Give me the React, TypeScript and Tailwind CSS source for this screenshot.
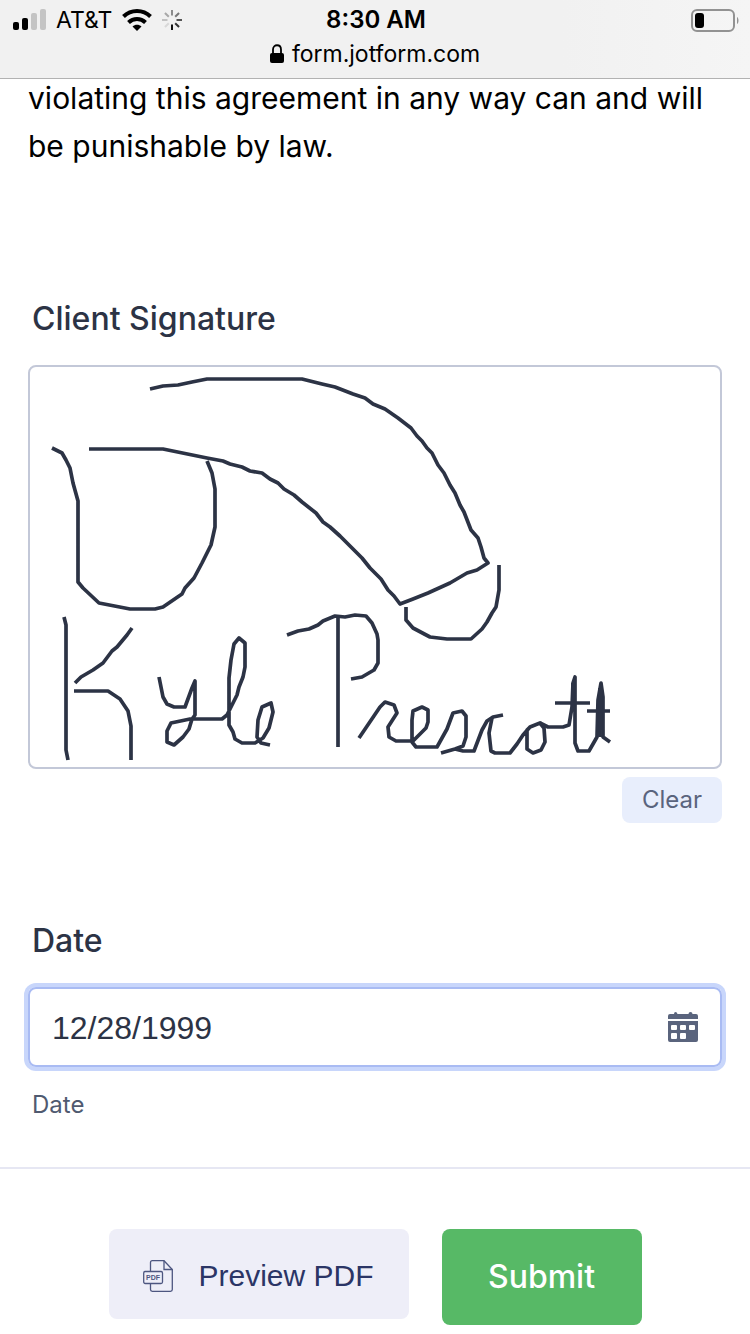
import React, { useState } from 'react';

const SIGNATURE_STROKES = [
  'M150 389L163 386L178 385L192 382L207 379H302L322 384L335 387L353 394L365 398L373 404L385 409L398 418L411 428L417 436L422 441L427 448L432 453L438 465L444 473L450 485L455 493L460 505L464 512L471 530L478 538L481 547L484 558L488 563L477 570L467 573L450 583L428 593L413 599L400 604L394 596L388 590L381 579L370 568L362 558L340 536L330 527L323 522L316 513L302 502L294 495L284 489L278 483L270 479L262 473L250 471L242 467L230 464L223 461L207 458L163 449H89',
  'M52 448L62 453L66 460L70 468L73 483L78 501V582L83 588L99 603L130 609H155L163 607L182 594L185 588L194 578L202 563L211 545L215 527V489L212 473L207 461',
  'M499 565V590L496 607L492 613L487 622L482 629L471 639H447L430 637L413 628L406 620V607',
  'M64 617L66 625V750L68 760',
  'M132 628L127 635L122 641L117 647L112 651L103 663L93 670L81 677L75 683',
  'M74 691H108L120 699L128 711L131 726V760',
  'M159 677L163 697L167 704L174 707H185L192 688L195 681V715L192 719L189 729L183 737L174 745L167 742V731L171 723L190 719H222L227 715L237 695L239 687L243 677L245 667V643L239 638L234 644L231 660L229 678V725L233 732L235 739L242 743H255L263 738L269 728L273 712L271 703L262 707L258 720L257 737L261 743L270 745',
  'M287 635L298 631L309 629L318 625L323 621L335 616L345 617L355 615L366 616L372 623L377 634L378 640V663L374 670L362 677L351 679',
  'M338 616V747',
  'M359 738L380 707L385 702L394 705L397 713L388 727L389 737L396 741H413L426 728L428 722V710L422 707L413 711L412 720V742L416 747H437L447 729L453 713L462 711L466 716V737L463 746L455 749L441 753',
  'M455 749L463 751H474L482 730L487 721L493 717L503 715',
  'M492 718L489 733L491 751L495 753H510L517 744L523 735L530 727L540 723L544 728L545 742L541 750L533 753L527 749V730L530 727',
  'M540 723L548 727H563L569 725L572 707L573 683L575 677V743L578 751H589L597 737L598 700L601 683L603 697V737L610 742',
  'M573 683V707M600 688V737M601 686V730',
  'M555 703H590M587 711H610',
];

const SPINNER_SPOKES = [
  { angle: 0, color: '#8c8c8c' },
  { angle: 45, color: '#777777' },
  { angle: 90, color: '#555555' },
  { angle: 135, color: '#333333' },
  { angle: 180, color: '#111111' },
  { angle: 225, color: '#d8d8d8' },
  { angle: 270, color: '#c2c2c2' },
  { angle: 315, color: '#a8a8a8' },
];

const SignalIcon: React.FC = () => (
  <svg width="33" height="22" viewBox="0 0 33 22" aria-label="Signal strength">
    <rect x="0" y="13" width="6" height="8" rx="2" fill="#000" />
    <rect x="9" y="9" width="6" height="12" rx="2" fill="#000" />
    <rect x="18" y="4" width="6" height="17" rx="2" fill="#c4c4c4" />
    <rect x="27" y="0" width="6" height="21" rx="2" fill="#c4c4c4" />
  </svg>
);

const WifiIcon: React.FC = () => (
  <svg width="30" height="22" viewBox="0 0 30 22" aria-label="Wi-Fi">
    <path d="M1.5 7.5C9 .2 21 .2 28.500 7.500" fill="none" stroke="#000" strokeWidth="4" />
    <path d="M6.500 13.500C11.300 8.800 18.700 8.800 23.500 13.500" fill="none" stroke="#000" strokeWidth="4" />
    <path d="M10.500 17.500C13 15 17 15 19.500 17.500L15 22Z" fill="#000" />
  </svg>
);

const Spinner: React.FC = () => (
  <svg width="20" height="20" viewBox="-10 -10 20 20" aria-label="Loading">
    {SPINNER_SPOKES.map(({ angle, color }) => (
      <path key={angle} d="M0 -4.500V-10" stroke={color} strokeWidth="2" transform={`rotate(${angle})`} />
    ))}
  </svg>
);

const BatteryIcon: React.FC = () => (
  <svg width="48" height="23" viewBox="0 0 48 23" aria-label="Battery low">
    <rect x="1" y="1" width="42" height="21" rx="5" fill="none" stroke="#929292" strokeWidth="2" />
    <rect x="4" y="4" width="9" height="15" rx="3" fill="#000" />
    <path d="M46 8C48 9 48 14 46 15Z" fill="#929292" />
  </svg>
);

const LockIcon: React.FC = () => (
  <svg width="14" height="20" viewBox="0 0 14 20" aria-hidden="true">
    <path d="M3 10V5.500C3 -.2 11 -.2 11 5.500V10" fill="none" stroke="#000" strokeWidth="1.800" />
    <rect x="0" y="9" width="14" height="10" rx="2" fill="#000" />
  </svg>
);

const CalendarIcon: React.FC = () => (
  <svg width="30" height="30" viewBox="0 0 30 30" aria-hidden="true">
    <path
      fill="#5a647d"
      fillRule="evenodd"
      d="M0 7V4Q0 2 2 2H6Q6 0 7.500 0T9.500 2H20.500Q20.500 0 22.500 0T24.500 2H28Q30 2 30 4V7ZM0 9H30V28Q30 30 28 30H2Q0 30 0 28ZM4 13H8Q9 13 9 14V17Q9 18 8 18H4Q3 18 3 17V14Q3 13 4 13ZM13 13H17Q18 13 18 14V17Q18 18 17 18H13Q12 18 12 17V14Q12 13 13 13ZM22 13H26Q27 13 27 14V17Q27 18 26 18H22Q21 18 21 17V14Q21 13 22 13ZM4 21H8Q9 21 9 22V26Q9 27 8 27H4Q3 27 3 26V22Q3 21 4 21ZM13 21H17Q18 21 18 22V26Q18 27 17 27H13Q12 27 12 26V22Q12 21 13 21Z"
    />
  </svg>
);

const PdfIcon: React.FC = () => (
  <svg width="30" height="32" viewBox="0 0 30 32" fill="none" stroke="#4d5680" strokeWidth="1.300" aria-hidden="true">
    <path d="M7.500 11V2.500Q7.500 .7 9.300 .7H21L29.300 9.500V29.500Q29.300 31.300 27.500 31.300H9.300Q7.500 31.300 7.500 29.500V24" />
    <path d="M21 .7V9.500H29.300" />
    <rect x=".7" y="11.500" width="18.800" height="12" rx="1.500" />
    <text x="10" y="20" textAnchor="middle" fontSize="7" fontWeight="700" fill="#4d5680" stroke="none" className="font-['Liberation_Sans',sans-serif]">
      PDF
    </text>
  </svg>
);

const StatusBar: React.FC = () => (
  <header className="relative z-10 border-b border-[#b2b2b2] bg-linear-to-r from-[#f1f1f1] from-75% to-[#f5f5f5] text-black">
    <div className="grid h-10 grid-cols-3 items-center pr-[11px] pl-[13px]">
      <div className="flex items-center gap-2.5">
        <SignalIcon />
        <span className="text-[23px]">AT&amp;T</span>
        <WifiIcon />
        <Spinner />
      </div>
      <time className="text-center text-2xl font-semibold">8:30 AM</time>
      <div className="flex justify-end">
        <BatteryIcon />
      </div>
    </div>
    <div className="flex h-[38px] items-start justify-center gap-2">
      <span className="pt-1">
        <LockIcon />
      </span>
      <span className="text-[23px] leading-7">form.jotform.com</span>
    </div>
  </header>
);

const App: React.FC = () => {
  const [signed, setSigned] = useState(true);
  const [date, setDate] = useState('12/28/1999');

  return (
    <div className="bg-white font-['Inter',sans-serif] text-[#2c3345]">
      <StatusBar />

      <main>
        <form onSubmit={(e) => e.preventDefault()}>
          <p className="-mt-[5px] px-7 text-[30px] leading-[48px] text-black">
            violating this agreement in any way can and will be punishable by law.
          </p>

          {/* Signature pad */}
          <section className="mt-32 px-7">
            <h2 className="px-1 text-[32px] leading-[42px] font-medium">Client Signature</h2>
            <div className="mt-[25px] rounded-lg border-2 border-[#c3c8d8]">
              <svg viewBox="30 367 690 400" className="block w-full" role="img" aria-label="Client Signature">
                {signed && (
                  <g fill="none" stroke="#2c3345" strokeWidth="3.700" strokeLinejoin="round">
                    {SIGNATURE_STROKES.map((d) => (
                      <path key={d} d={d} />
                    ))}
                  </g>
                )}
              </svg>
            </div>
            <div className="mt-2 flex justify-end">
              <button
                type="button"
                onClick={() => setSigned(false)}
                className="h-[46px] w-[100px] rounded-lg bg-[#e8eefc] text-2xl text-[#5a647d]"
              >
                Clear
              </button>
            </div>
          </section>

          {/* Date field */}
          <section className="mt-[97px] px-7">
            <label htmlFor="date" className="block px-1 text-[32px] leading-[42px] font-medium">
              Date
            </label>
            <div className="mt-[25px] flex h-20 items-center rounded-lg border-2 border-[#a9bbf3] px-[22px] ring-4 ring-[#c8d6fb]">
              <input
                id="date"
                type="text"
                value={date}
                onChange={(e) => setDate(e.target.value)}
                aria-describedby="date-hint"
                className="min-w-0 flex-1 pt-0.5 font-['Liberation_Sans',sans-serif] text-[32px] outline-none"
              />
              <button type="button" aria-label="Open calendar">
                <CalendarIcon />
              </button>
            </div>
            <p id="date-hint" className="mt-5 px-1 text-2xl leading-9 text-[#505a70]">
              Date
            </p>
          </section>

          {/* Form actions */}
          <div className="mt-11 flex items-start justify-center gap-[33px] border-t-2 border-[#e6e7f3] pt-[60px]">
            <button
              type="button"
              className="flex h-[90px] w-[300px] items-center justify-center gap-[25px] rounded-lg bg-[#eeeef8] pt-[3px] font-['Liberation_Sans',sans-serif] text-[30px] text-[#2b3566]"
            >
              <PdfIcon />
              Preview PDF
            </button>
            <button type="submit" className="h-24 w-[200px] rounded-lg bg-[#57b966] text-[32px] font-medium text-white">
              Submit
            </button>
          </div>
        </form>
      </main>
    </div>
  );
};

export default App;
